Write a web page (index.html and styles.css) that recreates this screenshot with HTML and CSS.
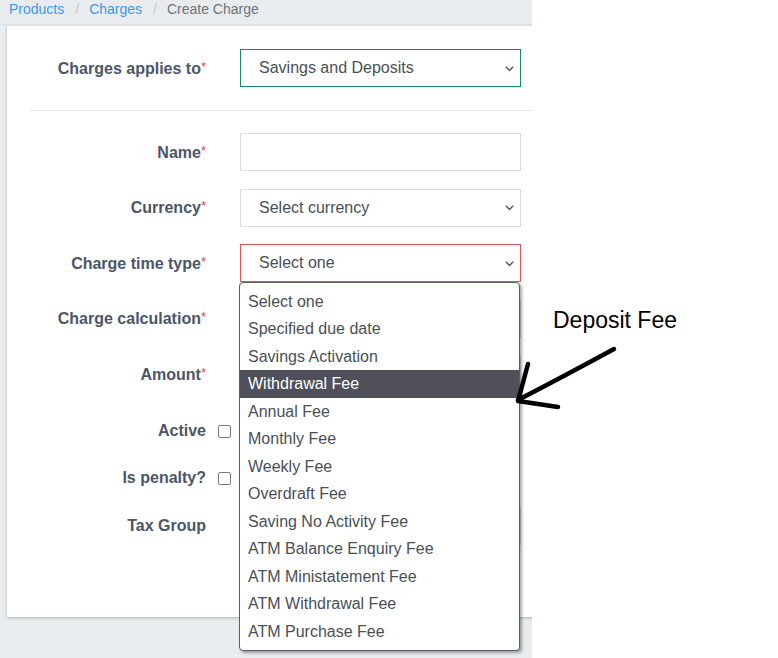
FILE: index.html
```html
<!DOCTYPE html>
<html>
<head>
<meta charset="utf-8">
<link rel="stylesheet" href="styles.css">
</head>
<body>
<div class="page">
  <div class="app">
    <nav class="crumbs">
      <a class="crumb-link">Products</a><span class="sep">/</span><a class="crumb-link">Charges</a><span class="sep">/</span><span class="crumb-cur">Create Charge</span>
    </nav>
    <div class="card">
      <div class="row">
        <div class="label">Charges applies to<span class="req">*</span></div>
        <div class="field select focus-ok"><span class="val">Savings and Deposits</span><svg class="chev" width="9" height="6" viewBox="0 0 9 6"><path d="M0.8 0.8 L4.5 4.6 L8.2 0.8" fill="none" stroke="#555" stroke-width="1.4"/></svg></div>
      </div>
      <hr class="divider">
      <div class="row">
        <div class="label">Name<span class="req">*</span></div>
        <div class="field"></div>
      </div>
      <div class="row">
        <div class="label">Currency<span class="req">*</span></div>
        <div class="field select"><span class="val">Select currency</span><svg class="chev" width="9" height="6" viewBox="0 0 9 6"><path d="M0.8 0.8 L4.5 4.6 L8.2 0.8" fill="none" stroke="#555" stroke-width="1.4"/></svg></div>
      </div>
      <div class="row">
        <div class="label">Charge time type<span class="req">*</span></div>
        <div class="field select invalid"><span class="val">Select one</span><svg class="chev" width="9" height="6" viewBox="0 0 9 6"><path d="M0.8 0.8 L4.5 4.6 L8.2 0.8" fill="none" stroke="#555" stroke-width="1.4"/></svg></div>
      </div>
      <div class="row">
        <div class="label">Charge calculation<span class="req">*</span></div>
        <div class="field select"></div>
      </div>
      <div class="row">
        <div class="label">Amount<span class="req">*</span></div>
        <div class="field"></div>
      </div>
      <div class="row check-row first-check">
        <div class="label">Active</div>
        <span class="checkbox"></span>
      </div>
      <div class="row check-row second-check">
        <div class="label">Is penalty?</div>
        <span class="checkbox"></span>
      </div>
      <div class="row">
        <div class="label">Tax Group</div>
        <div class="field select"></div>
      </div>
    </div>
  </div>
  <div class="side">
    <div class="note">Deposit Fee</div>
  </div>

  <ul class="dropdown">
    <li>Select one</li>
    <li>Specified due date</li>
    <li>Savings Activation</li>
    <li class="hl">Withdrawal Fee</li>
    <li>Annual Fee</li>
    <li>Monthly Fee</li>
    <li>Weekly Fee</li>
    <li>Overdraft Fee</li>
    <li>Saving No Activity Fee</li>
    <li>ATM Balance Enquiry Fee</li>
    <li>ATM Ministatement Fee</li>
    <li>ATM Withdrawal Fee</li>
    <li>ATM Purchase Fee</li>
  </ul>

  <svg class="arrow" width="120" height="80" viewBox="0 0 120 80">
    <path d="M104 9 Q60 33 8 60" fill="none" stroke="#000" stroke-width="4.5" stroke-linecap="round"/>
    <path d="M18 24 L8 61 L48 67" fill="none" stroke="#000" stroke-width="4.5" stroke-linecap="round" stroke-linejoin="round"/>
  </svg>
</div>
</body>
</html>
```

FILE: styles.css
```css
* { box-sizing: border-box; }
html, body { margin: 0; padding: 0; background: #fff; }
body { font-family: "Liberation Sans", Arial, sans-serif; }

.page {
  position: relative;
  width: 778px;
  height: 658px;
  display: flex;
  overflow: hidden;
}

.app {
  width: 532px;
  height: 658px;
  flex-shrink: 0;
  background: #e9ecef;
  overflow: hidden;
}

.crumbs {
  height: 25px;
  padding: 0 9px;
  font-size: 14px;
  line-height: 18px;
  border-bottom: 1px solid #dfe3e7;
  white-space: nowrap;
}
.crumb-link { color: #3d98e8; text-decoration: none; }
.sep { color: #c4c8cc; margin: 0 10px 0 11px; }
.crumb-cur { color: #6c757d; }

.card {
  width: 640px;
  height: 591px;
  margin: 1px 0 0 7px;
  background: #fff;
  box-shadow: 0 1px 3px rgba(0,0,0,0.25);
  padding: 23px 0 0 23px;
}

.row {
  display: grid;
  grid-template-columns: 176px 281px;
  column-gap: 34px;
  align-items: center;
  margin-bottom: 17.5px;
}

.label {
  text-align: right;
  font-weight: bold;
  font-size: 16px;
  color: #4b5669;
  white-space: nowrap;
}
.req {
  color: #e3453f;
  font-weight: normal;
  font-size: 13px;
  vertical-align: 3px;
}

.field {
  height: 38px;
  border: 1px solid #dcdcdc;
  background: #fff;
  display: flex;
  align-items: center;
  padding: 0 6px 0 18px;
  font-size: 16px;
  color: #495057;
}
.field.select { justify-content: space-between; }
.focus-ok { border-color: #178a6e; }
.invalid { border-color: #e35252; }
.chev { flex-shrink: 0; margin-top: 1px; }

.divider {
  border: 0;
  border-top: 1px solid #e6e6e6;
  margin: 23px 0 22px 0;
}

.check-row {
  grid-template-columns: 176px 13px;
  column-gap: 12px;
  height: 24px;
}
.first-check { margin-top: 26px; margin-bottom: 23px; }
.second-check { margin-bottom: 16.5px; }

.checkbox {
  width: 13px;
  height: 13px;
  border: 1.5px solid #7a7a7a;
  border-radius: 2px;
  background: #fff;
}

.side {
  flex: 1;
  background: #fff;
  padding: 307px 0 0 21px;
}
.note {
  font-size: 23px;
  line-height: 26px;
  color: #000;
}

.dropdown {
  position: absolute;
  left: 239px;
  top: 282px;
  width: 281px;
  height: 369px;
  margin: 0;
  padding: 4.5px 0 0 0;
  list-style: none;
  background: #fff;
  border: 1px solid #5e5e5e;
  border-radius: 4px;
  box-shadow: 2px 2px 3px rgba(0,0,0,0.35);
}
.dropdown li {
  height: 27.5px;
  line-height: 27.5px;
  padding-left: 8px;
  font-size: 16px;
  color: #495057;
  white-space: nowrap;
}
.dropdown li.hl {
  background: #50505a;
  color: #fff;
}

.arrow {
  position: absolute;
  left: 510px;
  top: 340px;
}
```
